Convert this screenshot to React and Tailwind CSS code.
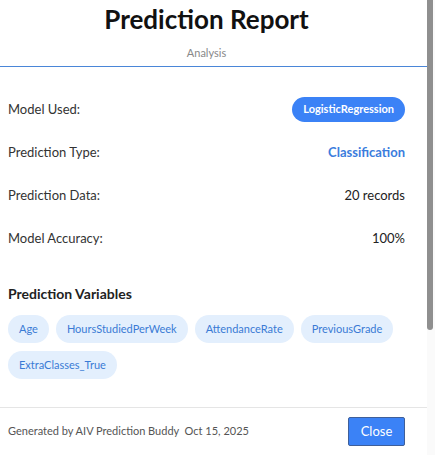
export default function App() {
  const rows = [
    { label: 'Model Used:', kind: 'badge', value: 'LogisticRegression' },
    { label: 'Prediction Type:', kind: 'link', value: 'Classification' },
    { label: 'Prediction Data:', kind: 'text', value: '20 records' },
    { label: 'Model Accuracy:', kind: 'text', value: '100%' },
  ];
  const vars = ['Age', 'HoursStudiedPerWeek', 'AttendanceRate', 'PreviousGrade', 'ExtraClasses_True'];

  return (
    <div className="flex w-[435px] h-[455px] bg-white overflow-hidden" style={{ fontFamily: 'Lato, "Noto Sans", sans-serif' }}>
      <div className="w-[427px] flex flex-col">
        {/* header */}
        <div className="border-b border-[#4a86d8] pb-[5px]">
          <div className="pl-2 pr-[22px]">
            <h1 className="text-center text-[26px] leading-[38px] font-bold text-[#111]">Prediction Report</h1>
            <p className="text-center text-[11px] text-[#888] mt-[7px] leading-[16px]">Analysis</p>
          </div>
        </div>

        {/* details */}
        <div className="pl-2 pr-[22px] pt-[21px]">
          {rows.map((r) => (
            <div key={r.label} className="h-[43px] flex items-center justify-between text-[13px]">
              <span className="text-[#333]">{r.label}</span>
              {r.kind === 'badge' && (
                <span className="bg-[#3b82f6] text-white text-[11px] font-bold rounded-full h-[25px] px-[11px] flex items-center">{r.value}</span>
              )}
              {r.kind === 'link' && <span className="text-[#3b7ddd] font-bold">{r.value}</span>}
              {r.kind === 'text' && <span className="text-[#222]">{r.value}</span>}
            </div>
          ))}
        </div>

        {/* variables */}
        <div className="pl-2 pr-[22px] pt-[24px]">
          <h2 className="text-[14px] font-bold text-[#222] leading-[20px]">Prediction Variables</h2>
          <div className="flex flex-wrap gap-x-[7px] gap-y-[8px] mt-[11px]">
            {vars.map((v) => (
              <span key={v} className="bg-[#e3effd] text-[#3a7bd5] text-[11px] h-[28px] px-[11px] rounded-full flex items-center">{v}</span>
            ))}
          </div>
        </div>

        {/* footer */}
        <div className="mt-auto border-t border-[#e5e5e5] h-[48px] pl-2 pr-[22px] flex items-center justify-between">
          <span className="text-[11px] text-[#555]">Generated by AIV Prediction Buddy&nbsp;&nbsp;Oct 15, 2025</span>
          <button className="bg-[#3b82f6] border border-[#3f5f99] text-white text-[13px] w-[57px] h-[29px] rounded-[2px]">Close</button>
        </div>
      </div>

      {/* scrollbar */}
      <div className="w-[8px] bg-[#fafafa] flex flex-col">
        <div className="w-[6px] h-[330px] bg-[#8f8f8f] rounded-b-[3px]"></div>
      </div>
    </div>
  );
}
